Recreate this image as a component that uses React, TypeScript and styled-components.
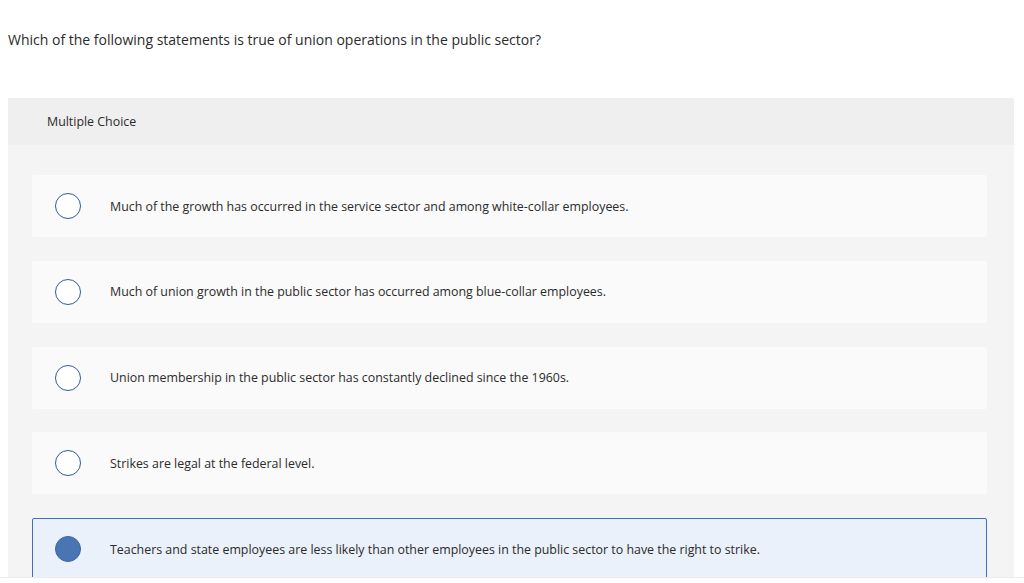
import React from "react";
import styled, { createGlobalStyle } from "styled-components";

const Global = createGlobalStyle`
  html, body { margin: 0; padding: 0; background: #fff; }
  body { font-family: "Open Sans", "Noto Sans", sans-serif; color: #2b2b2b; }
`;

const Page = styled.div`
  width: 1024px;
  height: 583px;
  overflow: hidden;
  box-sizing: border-box;
`;

const Frame = styled.div`
  height: 578px;
  border-bottom: 1px solid #ececec;
  overflow: hidden;
  box-sizing: border-box;
  padding: 0 10px 0 8px;
`;

const Question = styled.p`
  margin: 0;
  padding: 31px 0 0 0;
  font-size: 14px;
  line-height: 18px;
  height: 67px;
`;

const Panel = styled.section`
  background: #f4f4f4;
  border-top-right-radius: 3px;
`;

const Header = styled.div`
  background: #efefef;
  height: 47px;
  display: flex;
  align-items: center;
  padding-left: 39px;
  font-size: 12.4px;
`;

const List = styled.div`
  display: flex;
  flex-direction: column;
  gap: 23.75px;
  padding: 30px 27px 30px 24px;
`;

const Option = styled.label<{ $selected?: boolean }>`
  display: flex;
  align-items: center;
  height: 62px;
  box-sizing: border-box;
  border-radius: 2px;
  padding-left: 22px;
  background: ${(p) => (p.$selected ? "#eaf1fa" : "#fafafa")};
  border: 1px solid ${(p) => (p.$selected ? "#3d70bd" : "transparent")};
  font-size: 12.4px;
  cursor: pointer;
`;

const Radio = styled.span<{ $selected?: boolean }>`
  width: 26px;
  height: 26px;
  box-sizing: border-box;
  border-radius: 50%;
  flex: none;
  border: 1.5px solid ${(p) => (p.$selected ? "#3b65a3" : "#2f5b9c")};
  background: ${(p) => (p.$selected ? "#4a75b3" : "#fff")};
  margin-right: 29px;
`;

const options = [
  "Much of the growth has occurred in the service sector and among white-collar employees.",
  "Much of union growth in the public sector has occurred among blue-collar employees.",
  "Union membership in the public sector has constantly declined since the 1960s.",
  "Strikes are legal at the federal level.",
  "Teachers and state employees are less likely than other employees in the public sector to have the right to strike.",
];

export default function App() {
  const selected = 4;
  return (
    <Page>
      <Global />
      <Frame>
        <Question>Which of the following statements is true of union operations in the public sector?</Question>
        <Panel>
          <Header>Multiple Choice</Header>
          <List>
            {options.map((t, i) => (
              <Option key={i} $selected={i === selected}>
                <Radio $selected={i === selected} />
                {t}
              </Option>
            ))}
          </List>
        </Panel>
      </Frame>
    </Page>
  );
}
